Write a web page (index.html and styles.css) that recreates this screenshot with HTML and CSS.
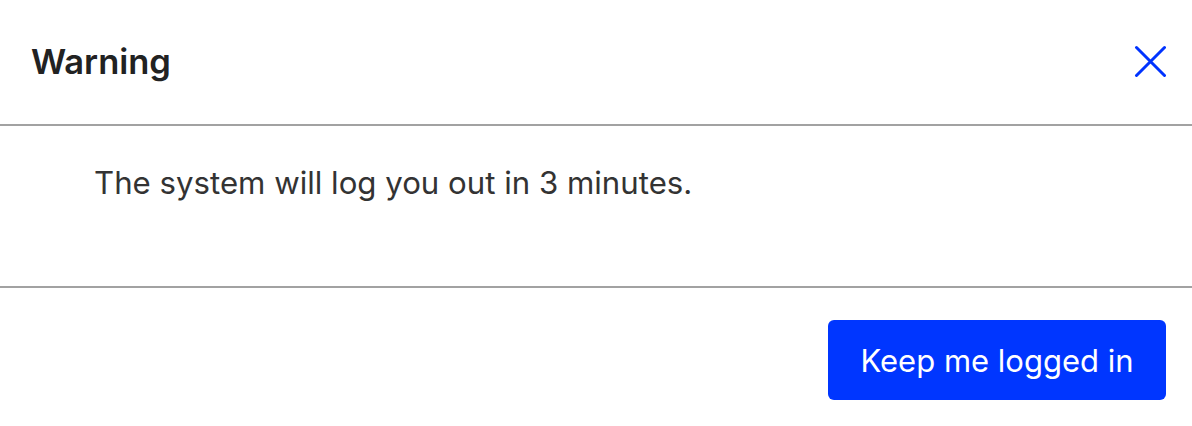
FILE: index.html
```html
<!DOCTYPE html>
<html lang="en">
<head>
<meta charset="utf-8">
<title>Warning</title>
<link rel="stylesheet" href="styles.css">
</head>
<body>
<div class="dialog">
  <header class="dialog-header">
    <h2 class="dialog-title">Warning</h2>
    <button class="close-btn" aria-label="Close">
      <svg width="32" height="32" viewBox="0 0 32 32" aria-hidden="true">
        <path d="M2.5 2.5 L30.5 30.5 M30.5 2.5 L2.5 30.5" stroke="#0033ff" stroke-width="3" stroke-linecap="round" fill="none"/>
      </svg>
    </button>
  </header>
  <div class="dialog-body">
    <p class="message">The system will log you out in 3 minutes.</p>
  </div>
  <footer class="dialog-footer">
    <button class="primary-btn">Keep me logged in</button>
  </footer>
</div>
</body>
</html>
```
FILE: styles.css
```css
html, body {
  margin: 0;
  padding: 0;
  background: #ffffff;
}
body {
  font-family: Inter, "Noto Sans", sans-serif;
  color: #222222;
}
.dialog {
  width: 1192px;
  height: 426px;
  display: flex;
  flex-direction: column;
}
.dialog-header {
  height: 126px;
  box-sizing: border-box;
  border-bottom: 2px solid #a2a2a2;
  display: flex;
  align-items: center;
  justify-content: space-between;
  padding: 0 26px 2px 31px;
}
.dialog-title {
  margin: 0;
  font-size: 34.5px;
  font-weight: 600;
  color: #222222;
}
.close-btn {
  background: none;
  border: 0;
  padding: 0;
  width: 32px;
  height: 32px;
  display: flex;
  cursor: pointer;
}
.dialog-body {
  height: 162px;
  box-sizing: border-box;
  border-bottom: 2px solid #a2a2a2;
  padding: 0 0 0 94px;
}
.message {
  margin: 0;
  padding-top: 38px;
  font-size: 31.2px;
  font-weight: 400;
  color: #333333;
}
.dialog-footer {
  display: flex;
  justify-content: flex-end;
  padding: 32px 26px 0 0;
}
.primary-btn {
  height: 80px;
  width: 338px;
  border: 0;
  border-radius: 6px;
  background: #0036ff;
  color: #ffffff;
  font-family: Inter, "Noto Sans", sans-serif;
  font-size: 31px;
  font-weight: 400;
}
```
